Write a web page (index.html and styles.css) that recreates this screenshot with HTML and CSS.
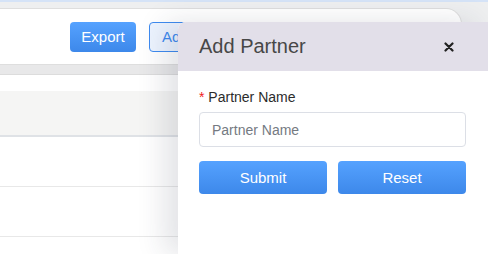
FILE: index.html
```html
<!DOCTYPE html>
<html lang="en">
<head>
    <meta charset="UTF-8">
    <meta name="viewport" content="width=device-width, initial-scale=1.0">
    <title>Partners</title>
    <link rel="stylesheet" href="styles.css">
</head>
<body>
    <div class="topbar"></div>
    <div class="page">
        <!-- toolbar -->
        <div class="toolbar">
            <button class="btn btn-primary">Export</button>
            <button class="btn btn-plain btn-add">Add Partner</button>
            <button class="btn btn-plain btn-wide">Import Partners</button>
        </div>
        <div class="band"></div>

        <!-- table -->
        <div class="table-card">
            <div class="table-head"></div>
            <div class="table-row"></div>
            <div class="table-row"></div>
            <div class="table-row"></div>
        </div>
    </div>

    <!-- drawer -->
    <div class="drawer">
        <div class="drawer-header">
            <h2>Add Partner</h2>
            <button class="close-btn" aria-label="Close">
                <svg width="10" height="10" viewBox="0 0 10 10">
                    <path d="M1.5 1.5 L8.5 8.5 M8.5 1.5 L1.5 8.5" stroke="#222" stroke-width="2.2" stroke-linecap="round"/>
                </svg>
            </button>
        </div>
        <form class="drawer-body">
            <label for="partner-name"><span class="required">*</span> Partner Name</label>
            <input type="text" id="partner-name" placeholder="Partner Name">
            <div class="button-group">
                <button type="submit" class="btn btn-primary btn-block">Submit</button>
                <button type="reset" class="btn btn-primary btn-block">Reset</button>
            </div>
        </form>
    </div>
</body>
</html>
```

FILE: styles.css
```css
html {
    overflow: hidden;
}
body {
    margin: 0;
    background: #eeeff0;
    font-family: "Liberation Sans", Arial, sans-serif;
    overflow: hidden;
    height: 254px;
    position: relative;
}
.topbar {
    height: 2px;
    background: #d5e3f7;
}
.page {
    padding-top: 6px;
}
.toolbar {
    height: 55px;
    background: #fff;
    border: 1px solid #dedede;
    border-left: none;
    border-radius: 0 16px 0 0;
    margin-right: 26px;
    display: flex;
    align-items: center;
    padding-left: 70px;
    gap: 13px;
}
.band {
    height: 9px;
    background: #e8e8e9;
    border-bottom: 1px solid #dcdcdc;
}
.table-card {
    background: #fff;
    padding-top: 16px;
}
.table-head {
    height: 44px;
    background: #f5f5f4;
    border-bottom: 2px solid #dfe2e6;
}
.table-row {
    height: 49px;
    border-bottom: 1px solid #e8e8e8;
}
.btn {
    height: 30px;
    border-radius: 4px;
    font-family: inherit;
    font-size: 15px;
    cursor: pointer;
}
.btn-primary {
    border: none;
    color: #fff;
    background: linear-gradient(#55a2ff, #3d88ea);
}
.toolbar .btn-primary {
    width: 66px;
}
.btn-plain {
    border: 1px solid #3e8bf0;
    background: #edf4ff;
    color: #3e8bf0;
    padding: 0 12px;
    text-align: left;
}
.btn-add {
    width: 130px;
}
.btn-wide {
    width: 149px;
    margin-left: 3px;
    border-color: #8fb9f2;
}
.drawer {
    position: absolute;
    left: 178px;
    top: 22px;
    right: 0;
    bottom: 0;
    background: #fff;
    border-top-left-radius: 8px;
    box-shadow: -14px 0 28px rgba(40, 50, 70, 0.13);
    overflow: hidden;
}
.drawer-header {
    height: 49px;
    background: #e2dfe9;
    display: flex;
    align-items: center;
    justify-content: space-between;
    padding: 0 34px 0 21px;
}
.drawer-header h2 {
    margin: 0;
    font-size: 20px;
    font-weight: normal;
    color: #474747;
}
.close-btn {
    border: none;
    background: none;
    padding: 0;
    display: flex;
}
.drawer-body {
    padding: 18px 22px 0 21px;
    display: flex;
    flex-direction: column;
}
label {
    font-size: 14px;
    color: #2b2b2b;
    line-height: 16px;
    margin-bottom: 7px;
}
.required {
    color: #f02020;
}
input {
    height: 35px;
    box-sizing: border-box;
    border: 1px solid #dcdfe6;
    border-radius: 4px;
    padding: 0 12px;
    font-family: inherit;
    font-size: 14px;
    outline: none;
}
input::placeholder {
    color: #757a82;
}
.button-group {
    display: flex;
    gap: 11px;
    margin-top: 14px;
}
.btn-block {
    flex: 1;
    height: 33px;
}
```
